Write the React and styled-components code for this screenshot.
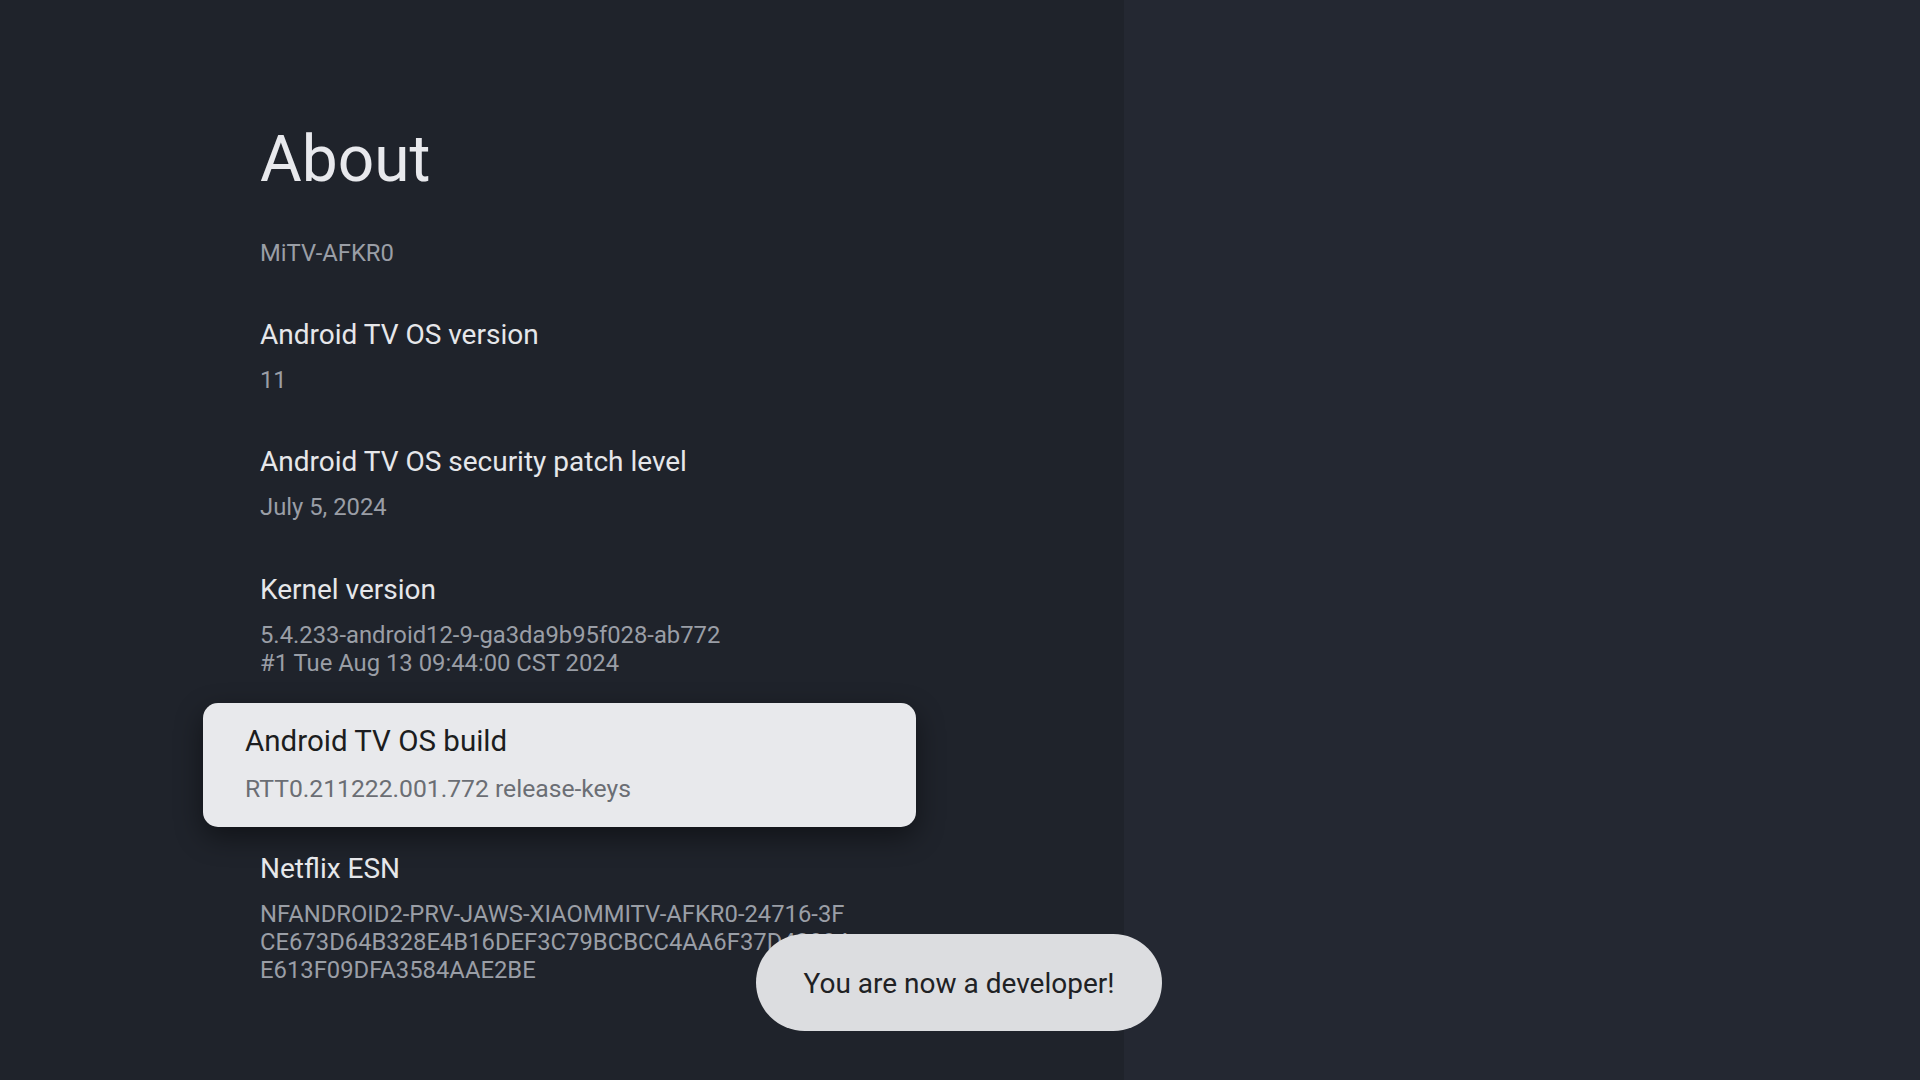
import React from 'react';
import styled, { createGlobalStyle } from 'styled-components';

const GlobalStyle = createGlobalStyle`
  html, body {
    margin: 0;
    padding: 0;
    background: #242832;
  }
  body {
    font-family: Roboto, "Noto Sans", "Liberation Sans", sans-serif;
    -webkit-font-smoothing: antialiased;
  }
`;

const Screen = styled.div`
  position: relative;
  display: flex;
  width: 1920px;
  height: 1080px;
  overflow: hidden;
  background: #242832;
`;

const Panel = styled.div`
  width: 1124px;
  height: 100%;
  box-sizing: border-box;
  padding: 121.5px 0 0 260px;
  background: #1f232b;
  box-shadow: 2px 0 6px rgba(0, 0, 0, 0.18);
  display: flex;
  flex-direction: column;
`;

const Aside = styled.div`
  flex: 1;
  background: #242832;
`;

const Heading = styled.h1`
  margin: 0;
  font-size: 64px;
  line-height: 76px;
  font-weight: 400;
  color: #e8e9ed;
`;

const Subtitle = styled.div`
  margin-top: 41px;
  font-size: 23.8px;
  line-height: 28px;
  color: #9a9ea6;
`;

const List = styled.div`
  display: flex;
  flex-direction: column;
  margin-top: 51px;
`;

const Row = styled.div`
  display: flex;
  flex-direction: column;
  gap: 15px;
  margin-bottom: ${p => (p.last ? 0 : 51)}px;
`;

const Title = styled.div`
  font-size: 28px;
  line-height: 34px;
  color: #e6e7ea;
`;

const Value = styled.div`
  font-size: 23.8px;
  line-height: 27.8px;
  color: #9a9ea6;
  white-space: pre-line;
`;

const FocusCard = styled.div`
  display: flex;
  flex-direction: column;
  gap: 16.7px;
  width: 713px;
  box-sizing: border-box;
  margin: 25px 0 25px -57px;
  padding: 21px 24px 23px 42px;
  border-radius: 15px;
  background: #e8e9ec;
  box-shadow: 0 10px 28px rgba(0, 0, 0, 0.45);
`;

const CardTitle = styled.div`
  font-size: 29.5px;
  line-height: 34px;
  color: #1c1d20;
`;

const CardValue = styled.div`
  font-size: 24.7px;
  line-height: 30px;
  color: #6b6e74;
`;

const Toast = styled.div`
  position: absolute;
  left: 756px;
  top: 934px;
  width: 406px;
  height: 97px;
  border-radius: 49px;
  background: #dcdde0;
  display: flex;
  align-items: center;
  justify-content: center;
  font-size: 28px;
  color: #202124;
  padding-top: 2px;
  box-sizing: border-box;
`;

const ROWS_BEFORE = [
  { title: 'Android TV OS version', value: '11' },
  { title: 'Android TV OS security patch level', value: 'July 5, 2024' },
  {
    title: 'Kernel version',
    value: '5.4.233-android12-9-ga3da9b95f028-ab772\n#1 Tue Aug 13 09:44:00 CST 2024',
  },
];

export default function App() {
  return (
    <>
      <GlobalStyle />
      <Screen>
        <Panel>
          <Heading>About</Heading>
          <Subtitle>MiTV-AFKR0</Subtitle>
          <List>
            {ROWS_BEFORE.map((row, i) => (
              <Row key={row.title} last={i === ROWS_BEFORE.length - 1}>
                <Title>{row.title}</Title>
                <Value>{row.value}</Value>
              </Row>
            ))}
            <FocusCard>
              <CardTitle>Android TV OS build</CardTitle>
              <CardValue>RTT0.211222.001.772 release-keys</CardValue>
            </FocusCard>
            <Row last>
              <Title>Netflix ESN</Title>
              <Value>
                {'NFANDROID2-PRV-JAWS-XIAOMMITV-AFKR0-24716-3F\nCE673D64B328E4B16DEF3C79BCBCC4AA6F37D43094\nE613F09DFA3584AAE2BE'}
              </Value>
            </Row>
          </List>
        </Panel>
        <Aside />
        <Toast>You are now a developer!</Toast>
      </Screen>
    </>
  );
}
